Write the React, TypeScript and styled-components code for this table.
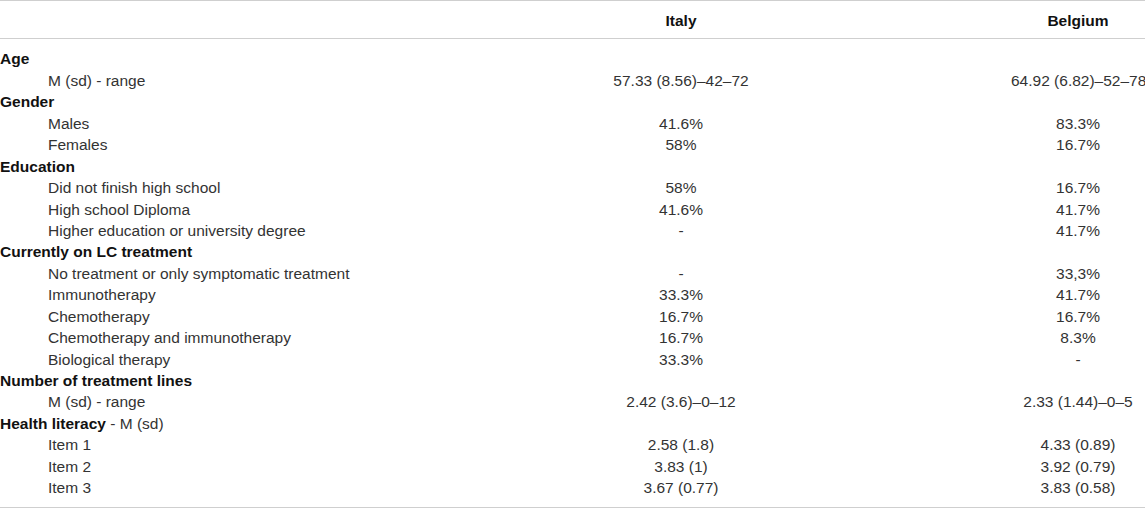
import React from "react";
import styled, { createGlobalStyle } from "styled-components";

const Global = createGlobalStyle`
  html, body { margin: 0; padding: 0; background: #ffffff; }
  body { font-family: "Liberation Sans", Arial, Helvetica, sans-serif; }
`;

const Table = styled.div`
  width: 1145px;
  border-top: 1px solid #cfcfcf;
  border-bottom: 1px solid #cfcfcf;
  font-size: 15.5px;
  line-height: 21.43px;
  color: #333333;
`;

const Head = styled.div`
  display: grid;
  grid-template-columns: 351px 660px 1fr;
  padding: 9px 0 7px;
  border-bottom: 1px solid #cfcfcf;
  font-weight: bold;
  color: #111111;
`;

const Body = styled.div`
  padding: 9px 0 8px;
`;

const Row = styled.div`
  display: grid;
  grid-template-columns: 351px 660px 1fr;
`;

const Label = styled.div<{ $indent?: boolean }>`
  padding-left: ${(p) => (p.$indent ? "48px" : "0")};
  white-space: nowrap;
`;

const Strong = styled.span`
  font-weight: bold;
  color: #111111;
`;

const Cell = styled.div`
  text-align: center;
  white-space: nowrap;
`;

type Item =
  | { kind: "group"; label: React.ReactNode }
  | { kind: "row"; label: string; italy: string; belgium: string };

const items: Item[] = [
  { kind: "group", label: <Strong>Age</Strong> },
  { kind: "row", label: "M (sd) - range", italy: "57.33 (8.56)–42–72", belgium: "64.92 (6.82)–52–78" },
  { kind: "group", label: <Strong>Gender</Strong> },
  { kind: "row", label: "Males", italy: "41.6%", belgium: "83.3%" },
  { kind: "row", label: "Females", italy: "58%", belgium: "16.7%" },
  { kind: "group", label: <Strong>Education</Strong> },
  { kind: "row", label: "Did not finish high school", italy: "58%", belgium: "16.7%" },
  { kind: "row", label: "High school Diploma", italy: "41.6%", belgium: "41.7%" },
  { kind: "row", label: "Higher education or university degree", italy: "-", belgium: "41.7%" },
  { kind: "group", label: <Strong>Currently on LC treatment</Strong> },
  { kind: "row", label: "No treatment or only symptomatic treatment", italy: "-", belgium: "33,3%" },
  { kind: "row", label: "Immunotherapy", italy: "33.3%", belgium: "41.7%" },
  { kind: "row", label: "Chemotherapy", italy: "16.7%", belgium: "16.7%" },
  { kind: "row", label: "Chemotherapy and immunotherapy", italy: "16.7%", belgium: "8.3%" },
  { kind: "row", label: "Biological therapy", italy: "33.3%", belgium: "-" },
  { kind: "group", label: <Strong>Number of treatment lines</Strong> },
  { kind: "row", label: "M (sd) - range", italy: "2.42 (3.6)–0–12", belgium: "2.33 (1.44)–0–5" },
  {
    kind: "group",
    label: (
      <>
        <Strong>Health literacy</Strong> - M (sd)
      </>
    ),
  },
  { kind: "row", label: "Item 1", italy: "2.58 (1.8)", belgium: "4.33 (0.89)" },
  { kind: "row", label: "Item 2", italy: "3.83 (1)", belgium: "3.92 (0.79)" },
  { kind: "row", label: "Item 3", italy: "3.67 (0.77)", belgium: "3.83 (0.58)" },
];

export default function App() {
  return (
    <>
      <Global />
      <Table>
        <Head>
          <div />
          <Cell>Italy</Cell>
          <Cell>Belgium</Cell>
        </Head>
        <Body>
          {items.map((it, i) =>
            it.kind === "group" ? (
              <Row key={i}>
                <Label>{it.label}</Label>
                <Cell />
                <Cell />
              </Row>
            ) : (
              <Row key={i}>
                <Label $indent>{it.label}</Label>
                <Cell>{it.italy}</Cell>
                <Cell>{it.belgium}</Cell>
              </Row>
            )
          )}
        </Body>
      </Table>
    </>
  );
}
